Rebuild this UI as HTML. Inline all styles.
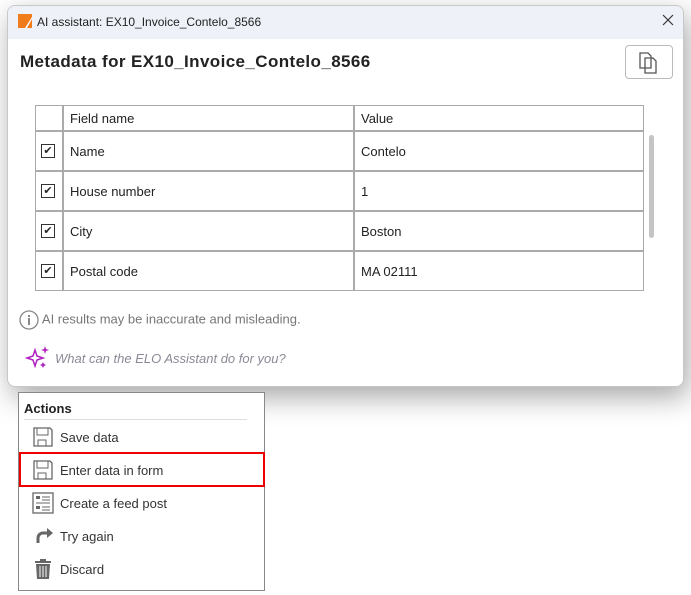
<!DOCTYPE html><html><head><style>
body{margin:0;width:691px;height:595px;background:#fff;position:relative;overflow:hidden;font-family:"Liberation Sans",sans-serif;}
.dlg{position:absolute;left:7px;top:5px;width:675px;height:380px;background:#fff;border:1px solid #c8c8c8;border-radius:8px;box-shadow:4px 10px 28px rgba(0,0,0,.35);overflow:hidden}
.tb{height:33px;background:#eef2f8;position:relative;font-size:12px;color:#222}
.tb .logo{position:absolute;left:10px;top:8px;width:14px;height:14px;background:#f07c1c}
.tb .t{position:absolute;left:29px;top:9px}
.tb .x{position:absolute;right:9px;top:8px}
h1{position:absolute;left:12px;top:46px;margin:0;font-size:17px;font-weight:bold;color:#222;letter-spacing:.4px}
.cp{position:absolute;left:617px;top:39px;width:46px;height:32px;border:1px solid #bbb;border-radius:4px}
table{position:absolute;left:27px;top:99px;border-collapse:separate;border-spacing:0;font-size:13px;color:#222}
td{border:1px solid #aaa;padding:0 6px;height:38px}
tr.h td{height:24px}
td.c{width:16px;padding:0 5px}
.cb{width:12px;height:12px;border:1px solid #333;font-size:11px;line-height:12px;text-align:center}
.sb{position:absolute;left:641px;top:129px;width:5px;height:103px;background:#c4c4c4;border-radius:3px}
.info{position:absolute;left:11px;top:304px;font-size:13px;color:#777}
.ask{position:absolute;left:47px;top:345px;font-size:13px;color:#8a8a96;font-style:italic}
.act{position:absolute;left:18px;top:392px;width:245px;height:197px;border:1px solid #888;background:#fff}
.act .hd{position:absolute;left:5px;top:8px;font-size:13px;font-weight:bold;color:#222;width:223px;border-bottom:1px solid #ddd;padding-bottom:3px}
.it{position:absolute;left:13px;font-size:13px;color:#333;display:flex;align-items:center}
.it svg{margin-right:6px}
.red{position:absolute;left:0;top:59px;width:242px;height:31px;border:2px solid #e00}
</style></head><body>
<div class="dlg">
<div class="tb"><div class="logo"><svg width="14" height="14"><path d="M9 14L14 5V3L7 14z" fill="#fff"/></svg></div><span class="t">AI assistant: EX10_Invoice_Contelo_8566</span><svg class="x" width="12" height="12"><path d="M1 1L11 11M11 1L1 11" stroke="#333" stroke-width="1.2"/></svg></div>
<h1>Metadata for EX10_Invoice_Contelo_8566</h1>
<div class="cp"><svg width="46" height="32"><path d="M14 7h8l3 3v12h-11z M19 12h8l3 3v12h-11z" fill="#fff" stroke="#555" stroke-width="1.3"/></svg></div>
<table>
<tr class="h"><td class="c"></td><td style="width:277px">Field name</td><td style="width:276px">Value</td></tr>
<tr><td class="c"><div class="cb">✔</div></td><td>Name</td><td>Contelo</td></tr>
<tr><td class="c"><div class="cb">✔</div></td><td>House number</td><td>1</td></tr>
<tr><td class="c"><div class="cb">✔</div></td><td>City</td><td>Boston</td></tr>
<tr><td class="c"><div class="cb">✔</div></td><td>Postal code</td><td>MA 02111</td></tr>
</table>
<div class="sb"></div>
<div class="info"><svg width="20" height="20" style="vertical-align:middle"><circle cx="10" cy="10" r="9" fill="none" stroke="#888" stroke-width="1.3"/><rect x="9" y="8" width="2" height="7" fill="#888"/><rect x="9" y="5" width="2" height="2" fill="#888"/></svg> AI results may be inaccurate and misleading.</div>
<svg style="position:absolute;left:17px;top:339px" width="26" height="26"><path d="M10 5 L12 11 L18 13 L12 15 L10 21 L8 15 L2 13 L8 11Z" fill="none" stroke="#b020c0" stroke-width="1.5"/><path d="M20 1l1 3 3 1-3 1-1 3-1-3-3-1 3-1z M18 17l1 2 2 1-2 1-1 2-1-2-2-1 2-1z" fill="#b020c0"/></svg>
<div class="ask">What can the ELO Assistant do for you?</div>
</div>
<div class="act">
<div class="hd">Actions</div>
<div class="it" style="top:33px"><svg width="22" height="22"><path d="M2 2h16l2 2v16h-18z" fill="none" stroke="#666" stroke-width="1.3"/><rect x="5" y="2" width="11" height="7" fill="none" stroke="#666"/><rect x="6" y="14" width="8" height="6" fill="none" stroke="#666"/></svg>Save data</div>
<div class="it" style="top:66px"><svg width="22" height="22"><path d="M2 2h16l2 2v16h-18z" fill="none" stroke="#666" stroke-width="1.3"/><rect x="5" y="2" width="11" height="7" fill="none" stroke="#666"/><rect x="6" y="14" width="8" height="6" fill="none" stroke="#666"/></svg>Enter data in form</div>
<div class="it" style="top:99px"><svg width="22" height="22"><rect x="1" y="1" width="20" height="20" fill="none" stroke="#666" stroke-width="1.3"/><rect x="4" y="4" width="4" height="3" fill="#666"/><rect x="4" y="14" width="4" height="3" fill="#666"/><path d="M10 5h8M10 8h8M4 11h14M10 15h8M10 18h8" stroke="#666"/></svg>Create a feed post</div>
<div class="it" style="top:132px"><svg width="22" height="22"><path d="M6 18v-5a5 5 0 0 1 5-5h7" fill="none" stroke="#666" stroke-width="3"/><path d="M15 3l6 5-6 5z" fill="#666"/></svg>Try again</div>
<div class="it" style="top:165px"><svg width="22" height="22"><rect x="3" y="3" width="16" height="2" fill="#666"/><rect x="8" y="1" width="6" height="2" fill="#666"/><path d="M4 6h14l-1 15h-12z" fill="#666"/><path d="M8 8v11M11 8v11M14 8v11" stroke="#fff"/></svg>Discard</div>
<div class="red"></div>
</div>
</body></html>
